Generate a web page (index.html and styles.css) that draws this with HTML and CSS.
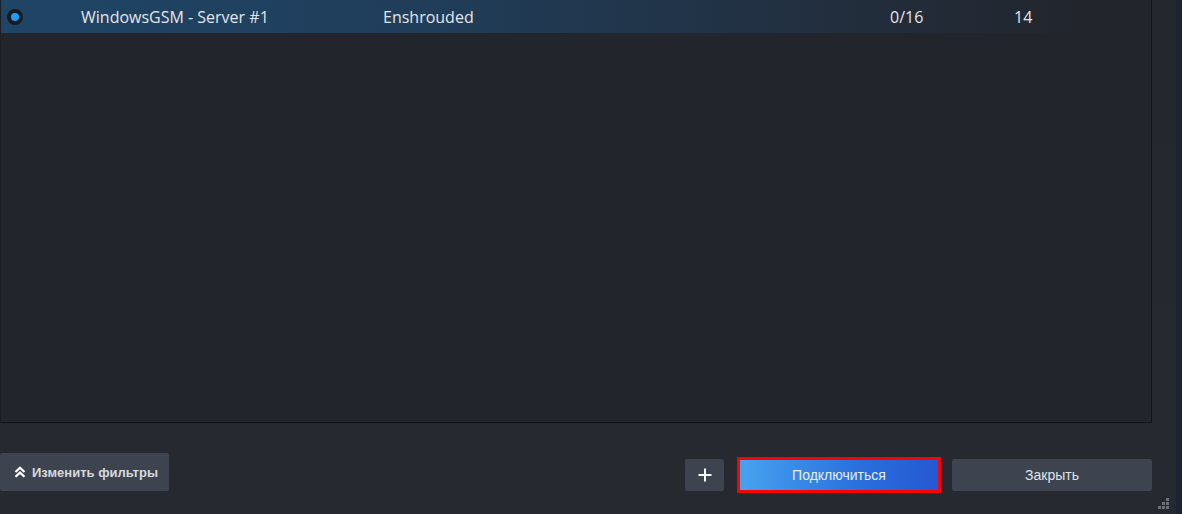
FILE: index.html
```html
<!DOCTYPE html>
<html lang="ru">
<head>
<meta charset="utf-8">
<title>Servers</title>
<link rel="stylesheet" href="styles.css">
</head>
<body>
<div class="window">
  <div class="main">
    <div class="list">
      <div class="row selected">
        <span class="cell radio"><span class="dot"></span></span>
        <span class="cell name">WindowsGSM - Server #1</span>
        <span class="cell game">Enshrouded</span>
        <span class="cell players">0/16</span>
        <span class="cell ping">14</span>
      </div>
    </div>
    <div class="footer">
      <button class="btn filters">
        <svg class="chev" width="12" height="12" viewBox="0 0 12 12"><path d="M1.5 6 L6 1.8 L10.5 6 M1.5 10.8 L6 6.6 L10.5 10.8" fill="none" stroke="#ffffff" stroke-width="2.2"/></svg>
        Изменить фильтры
      </button>
      <div class="spacer"></div>
      <button class="btn plus">
        <svg width="14" height="14" viewBox="0 0 14 14"><path d="M7 0.5 V13.5 M0.5 7 H13.5" stroke="#ffffff" stroke-width="2"/></svg>
      </button>
      <button class="btn connect">Подключиться</button>
      <button class="btn close">Закрыть</button>
    </div>
  </div>
  <div class="edge"></div>
  <div class="grip">
    <i class="g g1"></i><i class="g g2"></i><i class="g g3"></i><i class="g g4"></i><i class="g g5"></i><i class="g g6"></i>
  </div>
</div>
</body>
</html>
```
FILE: styles.css
```css
html, body {
  margin: 0;
  padding: 0;
  width: 1182px;
  height: 514px;
  overflow: hidden;
  background: #262930;
}
.window {
  position: relative;
  display: flex;
  width: 1182px;
  height: 514px;
  background: linear-gradient(180deg, #24272e 0%, #262930 100%);
  font-family: "Open Sans", "Liberation Sans", Arial, sans-serif;
}
.main {
  display: flex;
  flex-direction: column;
  width: 1176px;
}
.edge {
  width: 6px;
  background: #1a2434;
}
.list {
  width: 1150px;
  height: 422px;
  background: #22252c;
  border-left: 1px solid #1b1e24;
  border-right: 1px solid #11141a;
  border-bottom: 1px solid #11141a;
}
.row {
  display: flex;
  align-items: center;
  height: 33px;
  color: #e4e6e8;
  font-size: 16px;
}
.row.selected {
  background: linear-gradient(90deg, #1f4566 0%, #203e5b 35%, #222d3c 75%, #22252c 95%);
}
.cell { white-space: nowrap; }
.radio {
  width: 80px;
  display: flex;
  padding-left: 6px;
  box-sizing: border-box;
}
.dot {
  width: 8px;
  height: 8px;
  border-radius: 50%;
  background: #1c9cff;
  border: 4px solid #171a1f;
}
.name { width: 302px; }
.game { width: 507px; }
.players { width: 124px; }
.ping { width: 60px; }
.footer {
  display: flex;
  align-items: flex-end;
  padding-top: 30px;
  height: 38px;
}
.spacer { flex: 1; }
.btn {
  border: none;
  margin: 0;
  font-family: "Liberation Sans", Arial, sans-serif;
  font-size: 14px;
  color: #dfe3e6;
  background: #3d4450;
  border-radius: 2px;
  display: flex;
  align-items: center;
  justify-content: center;
  padding: 0;
}
.filters {
  width: 169px;
  height: 38px;
  justify-content: flex-start;
  padding-left: 14px;
  gap: 6px;
  font-size: 13px;
  font-weight: bold;
  color: #d6d9dc;
}
.plus {
  width: 39px;
  height: 32px;
}
.connect {
  width: 204px;
  height: 36px;
  margin-left: 13px;
  margin-bottom: -2px;
  border: 3px solid #ff0000;
  border-radius: 0;
  background: linear-gradient(90deg, #47a3ef 0%, #2a6fdc 60%, #2558d3 100%);
  color: #e8eef8;
  box-sizing: border-box;
}
.close {
  width: 200px;
  height: 32px;
  margin-left: 11px;
  margin-right: 24px;
}
.grip {
  position: absolute;
  right: 12px;
  bottom: 4px;
  width: 12px;
  height: 12px;
}
.g {
  position: absolute;
  width: 3px;
  height: 3px;
  background: #6a6f78;
}
.g1 { left: 8px; top: 0; }
.g2 { left: 4px; top: 4px; }
.g3 { left: 8px; top: 4px; }
.g4 { left: 0; top: 8px; }
.g5 { left: 4px; top: 8px; }
.g6 { left: 8px; top: 8px; }
```
